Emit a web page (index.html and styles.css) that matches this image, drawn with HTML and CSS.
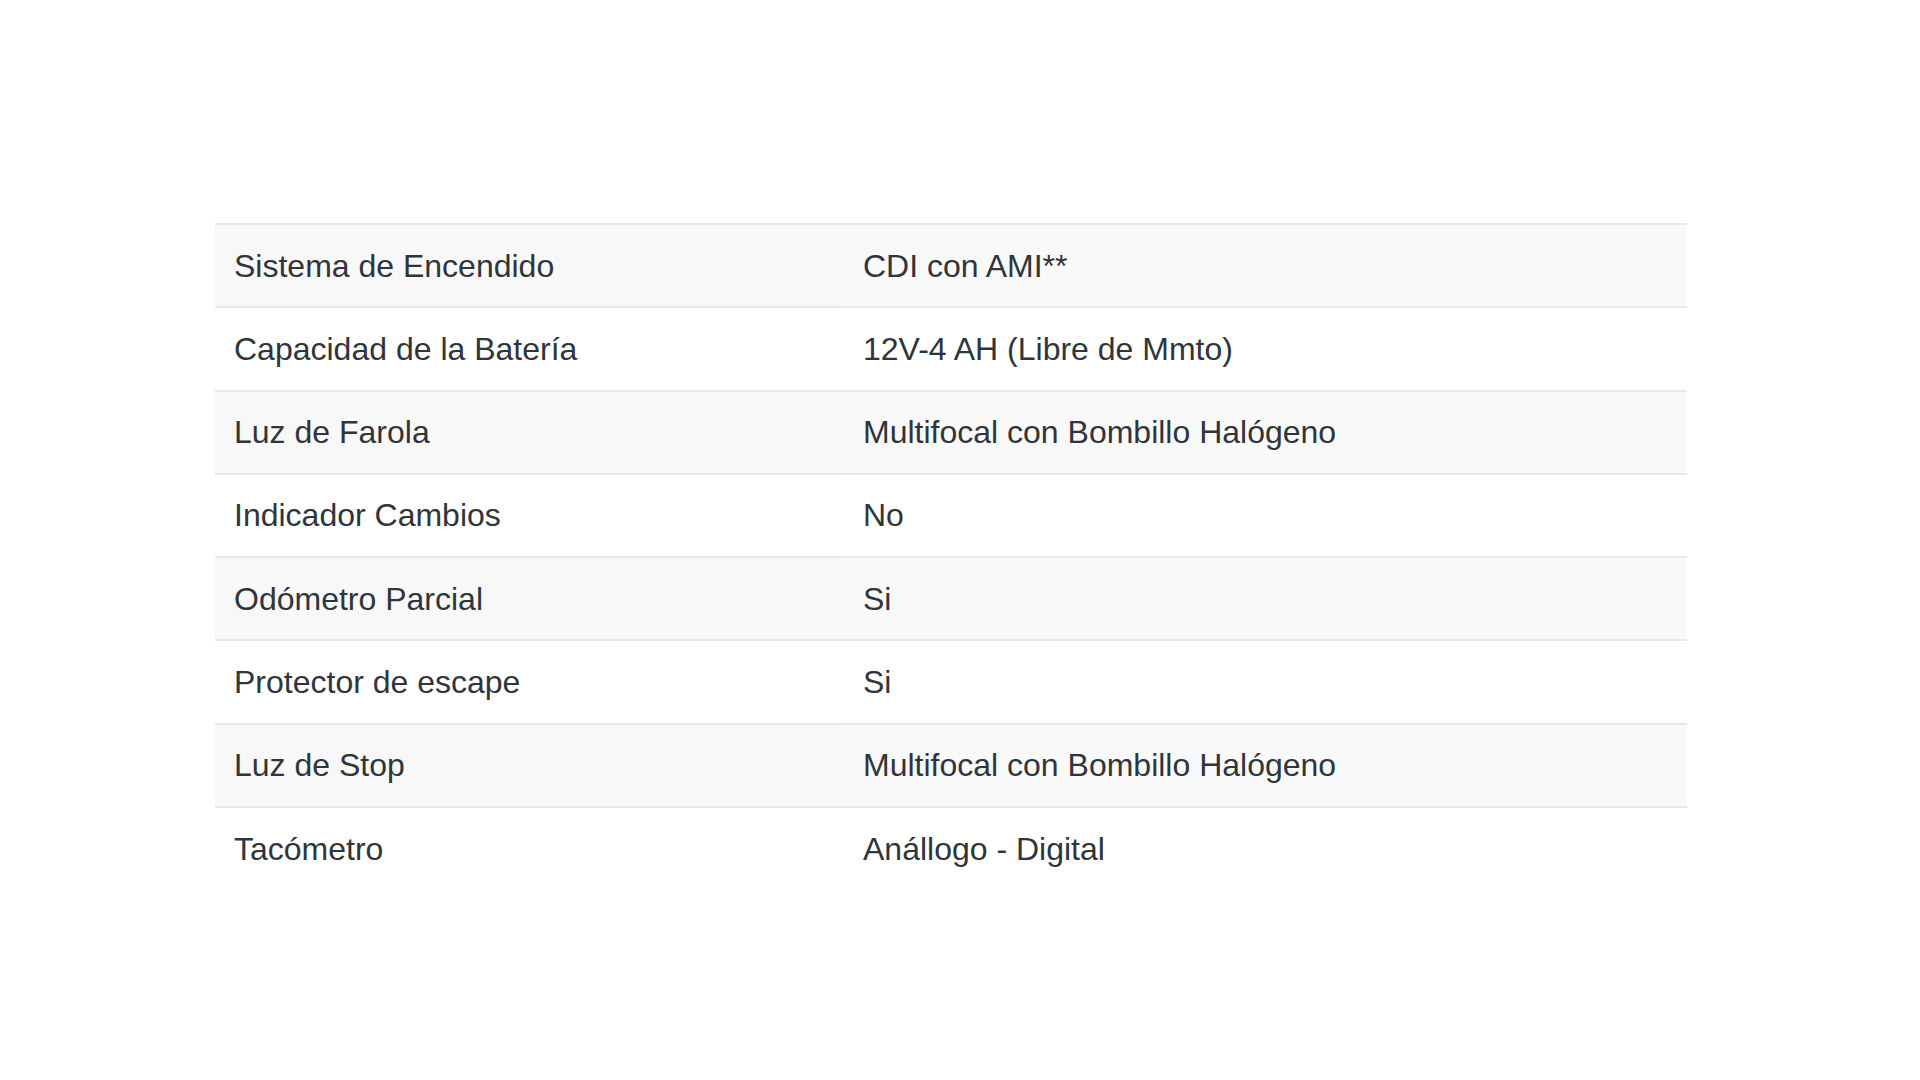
FILE: index.html
```html
<!DOCTYPE html>
<html lang="es">
<head>
<meta charset="utf-8">
<title>Especificaciones</title>
<link rel="stylesheet" href="styles.css">
</head>
<body>
<main class="page">
  <table class="specs">
    <tbody>
      <tr><td class="label">Sistema de Encendido</td><td class="value">CDI con AMI**</td></tr>
      <tr><td class="label">Capacidad de la Batería</td><td class="value">12V-4 AH (Libre de Mmto)</td></tr>
      <tr><td class="label">Luz de Farola</td><td class="value">Multifocal con Bombillo Halógeno</td></tr>
      <tr><td class="label">Indicador Cambios</td><td class="value">No</td></tr>
      <tr><td class="label">Odómetro Parcial</td><td class="value">Si</td></tr>
      <tr><td class="label">Protector de escape</td><td class="value">Si</td></tr>
      <tr><td class="label">Luz de Stop</td><td class="value">Multifocal con Bombillo Halógeno</td></tr>
      <tr><td class="label">Tacómetro</td><td class="value">Anállogo - Digital</td></tr>
    </tbody>
  </table>
</main>
</body>
</html>
```

FILE: styles.css
```css
html, body {
  margin: 0;
  padding: 0;
  background: #ffffff;
}

body {
  font-family: "Liberation Sans", Arial, sans-serif;
  color: #30353a;
}

.page {
  padding: 223px 0 0 215px;
  width: 1472px;
}

.specs {
  width: 100%;
  border-collapse: collapse;
  table-layout: fixed;
}

.specs td {
  font-size: 32px;
  line-height: 48px;
  padding: 16.65px 20px 16.65px 19px;
  border-top: 2px solid #e9e9e9;
  vertical-align: middle;
  white-space: nowrap;
}

.specs td.label {
  width: 590px;
}

.specs tr:nth-child(odd) td {
  background: #f8f8f8;
}

.specs tr:nth-child(odd) td.value {
  background: #f9f9f9;
}
```
